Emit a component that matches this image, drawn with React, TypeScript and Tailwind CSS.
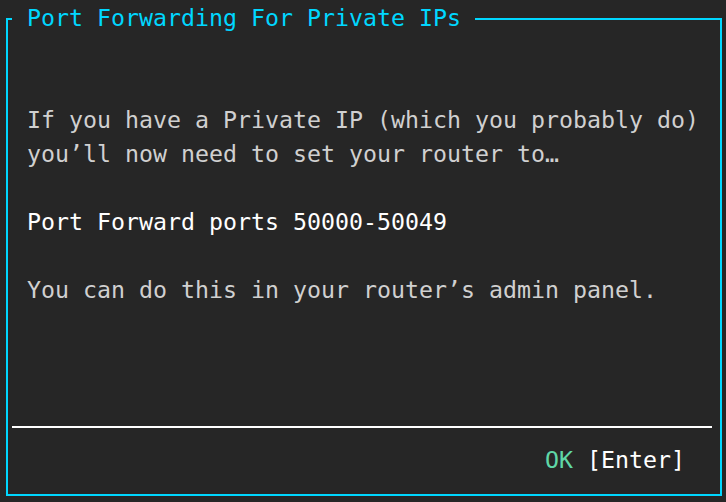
import React from "react";

export default function App() {
  const mono = { fontFamily: '"DejaVu Sans Mono", "Liberation Mono", monospace' };
  return (
    <div
      className="w-[726px] h-[502px] bg-[#262626] overflow-hidden pt-[18px] pl-[6px] text-[23.25px] leading-[34px]"
      style={mono}
    >
      <div className="relative w-[716px] h-[478px] border-2 border-[#00d7ff] flex flex-col">
        <div className="absolute left-[4px] top-[-19px] bg-[#262626] pl-[15px] pr-[14px] text-[#00d7ff] whitespace-pre">
          Port Forwarding For Private IPs
        </div>
        <div className="flex-1 pt-[83px] pl-[19px] text-[#d0d0d0] whitespace-pre">
          <div>If you have a Private IP (which you probably do)</div>
          <div>you’ll now need to set your router to…</div>
          <div>&nbsp;</div>
          <div className="text-white">Port Forward ports 50000-50049</div>
          <div>&nbsp;</div>
          <div>You can do this in your router’s admin panel.</div>
        </div>
        <div className="h-[2px] bg-white ml-[4px] mr-[8px]" />
        <div className="mt-[15px] mb-[17px] h-[34px] flex justify-end pr-[35px] whitespace-pre">
          <span className="text-[#5fd7a7]">OK</span>
          <span className="text-white"> [Enter]</span>
        </div>
      </div>
    </div>
  );
}
